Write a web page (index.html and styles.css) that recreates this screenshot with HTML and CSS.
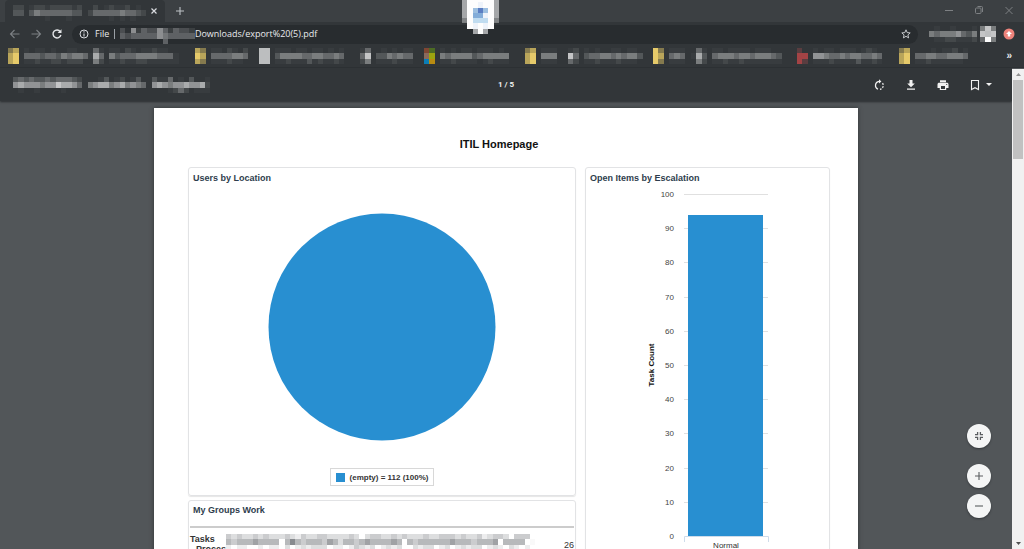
FILE: index.html
```html
<!DOCTYPE html>
<html lang="en">
<head>
<meta charset="utf-8">
<title>export (5).pdf</title>
<link rel="stylesheet" href="styles.css">
</head>
<body>
<header class="browser">
  <div class="tabstrip">
    <div class="tab">
      <svg class="mosaic" data-rows="22.1221222212..2.12112.1|33.3544444433.24444454432|......1...1.......1.1.1.."></svg>
      <button class="icon-btn tab-close" aria-label="Close tab"><svg width="8" height="8" viewBox="0 0 8 8"><path d="M1.500 1.500l5 5M6.500 1.500l-5 5" stroke="#dadce0" stroke-width="1.200"/></svg></button>
    </div>
    <button class="icon-btn new-tab" aria-label="New tab"><svg width="10" height="10" viewBox="0 0 10 10"><path d="M5 1v8M1 5h8" stroke="#bdc1c6" stroke-width="1.100"/></svg></button>
    <div class="window-controls">
      <button class="icon-btn" aria-label="Minimize"><svg width="10" height="10" viewBox="0 0 10 10"><path d="M1 5.500h8" stroke="#7d8083"/></svg></button>
      <button class="icon-btn" aria-label="Restore"><svg width="10" height="10" viewBox="0 0 10 10" fill="none" stroke="#7d8083"><rect x="1.500" y="3" width="5.500" height="5.500" rx="1"/><path d="M3.500 1.500h4a1 1 0 0 1 1 1v4.500"/></svg></button>
      <button class="icon-btn" aria-label="Close"><svg width="10" height="10" viewBox="0 0 10 10"><path d="M1.500 2l7 7M8.500 2l-7 7" stroke="#7d8083"/></svg></button>
    </div>
  </div>

  <div class="navbar">
    <button class="icon-btn" aria-label="Back"><svg width="12" height="12" viewBox="0 0 12 12" fill="none" stroke="#7c8084" stroke-width="1.100"><path d="M10.500 6h-9M5.500 2L1.500 6l4 4"/></svg></button>
    <button class="icon-btn" aria-label="Forward"><svg width="12" height="12" viewBox="0 0 12 12" fill="none" stroke="#7c8084" stroke-width="1.100"><path d="M1.500 6h9M6.500 2l4 4-4 4"/></svg></button>
    <button class="icon-btn" aria-label="Reload"><svg width="12" height="12" viewBox="0 0 12 12" fill="none" stroke="#e4e6e8" stroke-width="1.400"><path d="M9.300 3.600A4 4 0 1 0 9.900 7"/><path d="M10.500 1.200v3.900H6.600z" fill="#e4e6e8" stroke="none"/></svg></button>
    <div class="omnibox">
      <svg width="10" height="10" viewBox="0 0 10 10"><circle cx="5" cy="5" r="4" fill="none" stroke="#dadce0"/><path d="M5 4.500v3M5 2.300v1.200" stroke="#dadce0" stroke-width="1.100"/></svg>
      <span class="scheme">File</span>
      <span class="url"><svg class="mosaic url-mosaic" data-rows="31624336424332|43444446544444|........4....."></svg>Downloads/export%20(5).pdf</span>
      <button class="icon-btn star" aria-label="Bookmark this page"><svg width="12" height="12" viewBox="0 0 12 12"><path d="M6 1.800l1.200 2.800 3 .3-2.300 2 .7 3L6 8.300 3.400 9.900l.7-3-2.300-2 3-.3z" fill="none" stroke="#c4c7ca"/></svg></button>
    </div>
    <div class="profile">
      <svg class="mosaic" data-rows=".1..1...1|545556435|.11221112"></svg>
      <svg class="mosaic" data-rows="585|8H8|4W5"></svg>
    </div>
    <button class="icon-btn" aria-label="Update"><svg width="12" height="12" viewBox="0 0 12 12"><circle cx="6" cy="6" r="5.500" fill="#ee837b"/><path d="M6 3l3 3H7.200v2.500H4.800V6H3z" fill="#fff"/></svg></button>
  </div>

  <nav class="bookmarks" aria-label="Bookmarks">
    <a href="#" aria-label="Bookmark 1"><svg class="mosaic" data-cols="15" data-rows="yz.1.11.1..11|zY.444344354554|zY.11211221222"></svg></a>
    <a href="#" aria-label="Bookmark 2"><svg class="mosaic" data-cols="20" data-rows=".41.11.21.11211|174.5344455554441|.52.1121122111111"></svg></a>
    <a href="#" aria-label="Bookmark 3"><svg class="mosaic" data-cols="12" data-rows="zy.11.21.2|Yz.4444554|zy.111211"></svg></a>
    <a href="#" aria-label="Bookmark 4"><svg class="mosaic" data-cols="19" data-rows="HH.111.11.11.1.1|HH.3555544554454|HH.1121113121121"></svg></a>
    <a href="#" aria-label="Bookmark 5"><svg class="mosaic" data-cols="12" data-rows="14..1.1.11|48.3354544|25.1112111"></svg></a>
    <a href="#" aria-label="Bookmark 6"><svg class="mosaic" data-cols="19" data-rows="ab.1.1.11.111.1|cd.5455553455555|ef.1121111.12111"></svg></a>
    <a href="#" aria-label="Bookmark 7"><svg class="mosaic" data-cols="8" data-rows="yz.111|zY.555|zY.111"></svg></a>
    <a href="#" aria-label="Bookmark 8"><svg class="mosaic" data-cols="16" data-rows="12.1.1..11.11|84.34455454553|42.1121112111"></svg></a>
    <a href="#" aria-label="Bookmark 9"><svg class="mosaic" data-cols="7" data-rows="Yy.111|Yz.454|Yy.111"></svg></a>
    <a href="#" aria-label="Bookmark 10"><svg class="mosaic" data-cols="20" data-rows=".41.11.1111.111|173.4555455455543|.52.1121121111111"></svg></a>
    <a href="#" aria-label="Bookmark 11"><svg class="mosaic" data-cols="19" data-rows="r..1.11.111.121|RR.6654454554454|Rr.1112111131121"></svg></a>
    <a href="#" aria-label="Bookmark 12"><svg class="mosaic" data-cols="14" data-rows="yz....1.112.1|zY.4455445554|zY.112111111"></svg></a>
    <button class="icon-btn overflow" aria-label="More bookmarks">»</button>
  </nav>
  <svg class="mosaic share-badge" data-rows="GWWWWWG|GWWXWWG|GWmnmWG|GWooXWG|5WpppW5|.WXWXW.|..GWG.."></svg>
</header>

<div class="frame">
  <main class="viewer">
    <div class="pdfbar">
      <svg class="mosaic doc-title" data-rows="3434334344432...13.12.13..3114.1.3..1|6766656687764.56775675654.67656676672|.1..1....1...................1242.111"></svg>
      <span class="page-count">1 / 5</span>
      <div class="pdf-actions">
        <button class="icon-btn" aria-label="Rotate"><svg width="12" height="12" viewBox="0 0 12 12" fill="none" stroke="#f1f1f1" stroke-width="1.200"><path d="M5 10.300A4.200 4.200 0 0 1 6 2.300"/><path d="M7 10.300a4.200 4.200 0 0 0 1.500-.6M9.500 8.800a4 4 0 0 0 .7-1.600M10.200 5.800a4 4 0 0 0-.7-1.600"/><path d="M6 .2v4.400l2.400-2.200z" fill="#f1f1f1" stroke="none"/></svg></button>
        <button class="icon-btn" aria-label="Download"><svg width="12" height="12" viewBox="0 0 12 12" fill="#f1f1f1"><path d="M4.500 1h3v3.500h2.300L6 8.200 2.200 4.500h2.300zM2 9.500h8v1.200H2z"/></svg></button>
        <button class="icon-btn" aria-label="Print"><svg width="12" height="12" viewBox="0 0 12 12"><path d="M3 1.200h6v2H3zM2.200 3.800h7.600c1 0 1.700.7 1.700 1.600V9H9.200v2H2.800V9H.5V5.400c0-.9.700-1.600 1.700-1.600z" fill="#f1f1f1"/><path d="M4 7h4v3H4z" fill="#323639"/><circle cx="9.700" cy="5.500" r=".6" fill="#323639"/></svg></button>
        <button class="icon-btn bookmark-menu" aria-label="Bookmarks"><svg width="12" height="12" viewBox="0 0 12 12"><path d="M2.500 1.500h7v9L6 8.700l-3.500 1.800z" fill="none" stroke="#f1f1f1" stroke-width="1.100"/></svg><svg width="6" height="3" viewBox="0 0 6 3"><path d="M0 0h6L3 3z" fill="#f1f1f1"/></svg></button>
      </div>
    </div>

    <article class="page">
      <h1>ITIL Homepage</h1>
      <div class="dashboard">
        <div class="column">
          <section class="card pie-card">
            <h2>Users by Location</h2>
            <svg class="pie" viewBox="0 0 228 228" role="img" aria-label="empty 100%"><circle cx="114" cy="114" r="113.500" fill="#288fd1"/></svg>
            <div class="legend"><span class="swatch"></span>(empty) = 112 (100%)</div>
          </section>
          <section class="card groups-card">
            <h2>My Groups Work</h2>
            <table>
              <tr>
                <th scope="row">Tasks<br><span class="sub">Proces</span></th>
                <td class="group-name"><svg class="mosaic" data-rows="4343343433343243344333343.344334343334334443433423443.444|5455565555.5754555465355456555565.54555555655545556.5555.1|2.22..2.22.3.232333.22.24323.2323..3233.23.23233.232.32.2"></svg></td>
                <td class="total">26</td>
              </tr>
            </table>
          </section>
        </div>
        <section class="card bar-card">
          <h2>Open Items by Escalation</h2>
          <svg class="bars" width="242" height="372" viewBox="0 0 242 372" role="img" aria-label="Task Count by escalation"></svg>
        </section>
      </div>
    </article>

    <div class="zoom-controls">
      <button class="round fit" aria-label="Fit to page"><svg width="10" height="10" viewBox="0 0 10 10" fill="none" stroke="#5a5d60" stroke-width="1.300"><path d="M1 3.600h2.600V1M6.400 1v2.600H9M1 6.400h2.600V9M6.400 9V6.400H9"/></svg></button>
      <button class="round" aria-label="Zoom in"><svg width="10" height="10" viewBox="0 0 10 10"><path d="M5 1v8M1 5h8" stroke="#5a5d60" stroke-width="1.100"/></svg></button>
      <button class="round" aria-label="Zoom out"><svg width="10" height="10" viewBox="0 0 10 10"><path d="M1 5h8" stroke="#5a5d60" stroke-width="1.100"/></svg></button>
    </div>
  </main>
  <div class="scrollbar">
    <button class="icon-btn" aria-label="Scroll up"><svg width="5" height="3" viewBox="0 0 5 3"><path d="M0 3h5L2.500 0z" fill="#929292"/></svg></button>
    <div class="thumb"></div>
    <button class="icon-btn" aria-label="Scroll down"><svg width="5" height="3" viewBox="0 0 5 3"><path d="M0 0h5L2.500 3z" fill="#505050"/></svg></button>
  </div>
</div>
<script src="app.js"></script>
</body>
</html>
```

FILE: styles.css
```css
* { box-sizing: border-box; }
body {
  margin: 0;
  height: 100vh;
  display: flex;
  flex-direction: column;
  overflow: hidden;
  background: #525659;
  font-family: "Liberation Sans", Arial, sans-serif;
}
svg { display: block; flex: none; }
.icon-btn {
  display: flex;
  align-items: center;
  justify-content: center;
  padding: 0;
  border: 0;
  background: none;
  color: #e8eaed;
}
.mosaic { height: 16px; color: #fff; shape-rendering: crispEdges; }

.browser { position: relative; background: #323639; flex: none; }
.tabstrip {
  display: flex;
  align-items: center;
  height: 22px;
  padding: 0 10px 0 5px;
  background: #3c4043;
}
.tab {
  display: flex;
  align-items: center;
  justify-content: space-between;
  width: 160px;
  height: 22px;
  padding: 0 7px 0 8px;
  background: #323639;
  border-radius: 4px 4px 0 0;
}
.tab .mosaic { margin-top: 3px; }
.tab-close { margin-right: 0; }
.new-tab { margin-left: 10px; }
.window-controls { display: flex; gap: 20px; margin-left: auto; padding-bottom: 2px; }

.navbar { display: flex; align-items: center; height: 24px; padding: 0 9px; gap: 9px; }
.omnibox {
  flex: 1;
  display: flex;
  align-items: center;
  height: 19px;
  padding: 0 6px 0 7px;
  border-radius: 10px;
  background: #282c2f;
  color: #e8eaed;
  font: 9px/12px "Open Sans", "Noto Sans", sans-serif;
}
.scheme { margin-left: 6px; padding-right: 5px; border-right: 1px solid #9aa0a6; line-height: 10px; }
.url { display: flex; align-items: center; margin-left: 5px; }
.url-mosaic { margin-top: 4px; }
.star { margin-left: auto; }
.profile { display: flex; align-items: center; gap: 3px; margin-left: 2px; margin-right: -2px; }

.bookmarks {
  display: flex;
  align-items: center;
  height: 22px;
  padding: 0 12px 2px 8px;
  border-bottom: 1px solid #2c3033;
}
.overflow { margin-left: auto; font-size: 10px; font-weight: bold; }
.share-badge { position: absolute; top: -3px; left: 462px; height: 37px; }

.frame { flex: 1; min-height: 0; display: flex; }
.viewer { position: relative; flex: 1; min-width: 0; overflow: hidden; }
.pdfbar {
  display: grid;
  grid-template-columns: 1fr auto 1fr;
  align-items: center;
  height: 33px;
  padding: 0 20px 0 13px;
  background: #323639;
  box-shadow: 0 1px 2px #2a2d30;
  color: #f1f1f1;
}
.page-count { font: bold 8px/12px Roboto, sans-serif; padding-left: 7px; }
.pdf-actions { display: flex; justify-content: flex-end; gap: 20px; }
.bookmark-menu { gap: 5px; }

.page {
  width: 704px;
  min-height: 900px;
  margin: 7px auto 0;
  padding: 29px 28px 0 34px;
  background: #fff;
  box-shadow: 0 0 4px #2f3235;
}
h1 { margin: 0 20px 16px 0; font-size: 11px; line-height: 14px; text-align: center; color: #111; }
.dashboard { display: grid; grid-template-columns: 388px 1fr; gap: 9px; }
.column { display: flex; flex-direction: column; gap: 4px; }
.card {
  border: 1px solid #e2e3e5;
  border-radius: 3px;
  box-shadow: 0 1px 1px #e6e6e6;
}
h2 { margin: 0; padding: 3px 4px 1px; font-size: 9px; line-height: 14px; color: #2e3d4d; }
.pie-card { display: flex; flex-direction: column; height: 329px; }
.pie { width: 228px; height: 228px; margin: 27px auto; }
.legend {
  display: flex;
  align-items: center;
  align-self: center;
  gap: 5px;
  height: 18px;
  padding: 0 5px;
  border: 1px solid #d8d8d8;
  font-size: 8px;
  font-weight: bold;
  color: #333;
}
.swatch { width: 9px; height: 9px; background: #288fd1; }
.groups-card { min-height: 300px; padding: 0 1px; }
.groups-card h2 { padding: 2px 3px 1px; }
table { width: 100%; margin-top: 8px; border-collapse: collapse; border-top: 2px solid #ccc; }
th, td { padding: 6px 0 0; vertical-align: top; text-align: left; font-size: 9px; line-height: 10px; color: #333; }
th { width: 33px; }
.sub { padding-left: 6px; }
.group-name .mosaic { color: #33383f; }
.total { padding-top: 12px; text-align: right; }
.bars { width: 242px; height: 372px; font-size: 8px; }
.bar-card { min-height: 500px; }

.zoom-controls { position: absolute; right: 21px; bottom: 31px; display: flex; flex-direction: column; gap: 6px; }
.round {
  display: flex;
  align-items: center;
  justify-content: center;
  width: 24px;
  height: 24px;
  padding: 0;
  border: 0;
  border-radius: 50%;
  background: #f4f5f5;
  box-shadow: 0 1px 2px #33373a;
}
.fit { margin-bottom: 10px; }

.scrollbar { display: flex; flex-direction: column; width: 12px; margin-top: 1px; background: #f1f1f1; }
.scrollbar .icon-btn { height: 11px; flex: none; }
.thumb { height: 79px; margin: 0 1px auto; background: #c1c1c1; }
```

FILE: app.js
```js
const SVG_NS = "http://www.w3.org/2000/svg";
const PALETTE = {
  Y: "#e6ca6a", y: "#857a4e", z: "#b9a55a", W: "#fdfdfd", G: "#a5a7a9", H: "#bcbebf",
  R: "#a34345", r: "#5a3d40",
  a: "#7f4633", b: "#4c6b24", c: "#8a6a5c", d: "#9ca40f", e: "#0b7db5", f: "#b88b12",
  X: "#eef3fa", m: "#9dbfe0", n: "#5a7dc2", o: "#83add9", p: "#c0dcf0"
};

function add(parent, name, attrs, text) {
  const node = document.createElementNS(SVG_NS, name);
  for (const key in attrs) node.setAttribute(key, attrs[key]);
  if (text !== undefined) node.textContent = text;
  parent.appendChild(node);
}

// Digits set the opacity of a cell; letters pick a palette colour.
document.querySelectorAll(".mosaic").forEach((svg) => {
  const rows = svg.dataset.rows.split("|");
  const cols = Number(svg.dataset.cols) || Math.max(...rows.map((r) => r.length));
  svg.setAttribute("viewBox", `0 0 ${cols} ${rows.length}`);
  rows.forEach((row, y) => [...row].forEach((cell, x) => {
    if (cell === ".") return;
    const box = { x, y, width: 1, height: 1, fill: PALETTE[cell] || "currentColor" };
    if (!PALETTE[cell]) box["fill-opacity"] = Math.pow(cell / 10, 1.5);
    add(svg, "rect", box);
  }));
});

// Bar chart
const chart = document.querySelector(".bars");
const top0 = 8, bottom0 = 350;
const yOf = (value) => Math.round(bottom0 - (bottom0 - top0) * value / 100);
for (let v = 0; v <= 100; v += 10) {
  const y = yOf(v);
  if (v) add(chart, "rect", { x: 98, y, width: 84, height: 1, fill: "#e0e0e0" });
  add(chart, "text", { x: 88, y: y + 3, "text-anchor": "end", fill: "#444" }, v);
}
add(chart, "rect", { x: 102, y: yOf(94), width: 75, height: bottom0 - yOf(94), fill: "#288fd1" });
add(chart, "path", { d: "M98.500 356v-5.500h84v5.500", fill: "none", stroke: "#cfdcea" });
add(chart, "text", { x: 140, y: 362, "text-anchor": "middle", fill: "#333" }, "Normal");
add(chart, "text", { x: 0, y: 0, transform: "translate(68 179) rotate(-90)", "text-anchor": "middle", "font-weight": "bold", fill: "#111" }, "Task Count");
```
